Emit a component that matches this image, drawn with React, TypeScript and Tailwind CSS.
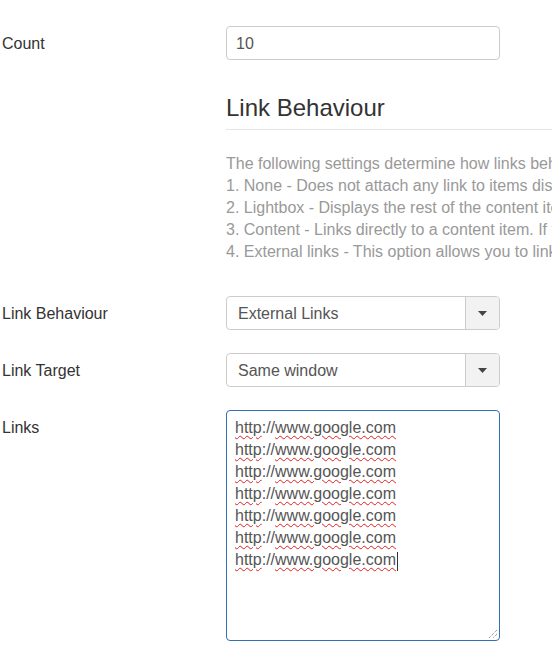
import React from "react";

const font = "font-['Liberation_Sans',Arial,sans-serif]";

function Label({ children }: { children: React.ReactNode }) {
  return (
    <div className="h-[34px] w-[226px] shrink-0 translate-y-px pl-[2px] text-[16px] leading-[34px] text-[#333]">
      {children}
    </div>
  );
}

function Select({ value }: { value: string }) {
  return (
    <div className="flex h-[34px] w-[274px] overflow-hidden rounded-[4px] border border-[#ccc] bg-white">
      <div className="flex-1 translate-y-px pl-[11px] text-[16px] leading-[32px] text-[#555]">{value}</div>
      <div className="flex w-[34px] items-center justify-center border-l border-[#ccc] bg-[#f2f2f2]">
        <svg width="9" height="5" viewBox="0 0 9 5">
          <path d="M0 0h9L4.5 5z" fill="#444" />
        </svg>
      </div>
    </div>
  );
}

function LinkLine({ last }: { last?: boolean }) {
  const wavy = "underline decoration-wavy decoration-[#e02020] decoration-[1px] underline-offset-[2px]";
  return (
    <div className="whitespace-nowrap">
      <span className={wavy}>http</span>
      <span>://</span>
      <span className={wavy}>www.google.com</span>
      {last && (
        <span className="relative">
          <span className="absolute left-[1px] top-[1px] h-[19px] w-px bg-[#333]" />
        </span>
      )}
    </div>
  );
}

export default function App() {
  const links = Array.from({ length: 7 });

  return (
    <div className={`${font} h-[657px] w-[552px] overflow-hidden bg-white pt-[26px]`}>
      <div className="flex">
        <Label>Count</Label>
        <div className="h-[34px] w-[274px] rounded-[4px] border border-[#ccc] pl-[9px] text-[16px] leading-[32px] text-[#555]">
          <div className="translate-y-px">10</div>
        </div>
      </div>

      <div className="ml-[226px] mt-[34px] w-[500px]">
        <h3 className="text-[24px] leading-[28px] text-[#333]">Link Behaviour</h3>
        <div className="mt-[7px] border-t border-[#e5e5e5]" />
        <div className="mt-[23px] whitespace-nowrap text-[16px] leading-[22px] text-[#999]">
          <p>The following settings determine how links behave when clicking on the items.</p>
          <p>1. None - Does not attach any link to items displayed in this module.</p>
          <p>2. Lightbox - Displays the rest of the content item in a lightbox.</p>
          <p>3. Content - Links directly to a content item. If the item is not linked, nothing happens.</p>
          <p>4. External links - This option allows you to link each item to an external URL.</p>
        </div>
      </div>

      <div className="mt-[33px] flex">
        <Label>Link Behaviour</Label>
        <Select value="External Links" />
      </div>

      <div className="mt-[23px] flex">
        <Label>Link Target</Label>
        <Select value="Same window" />
      </div>

      <div className="mt-[23px] flex">
        <Label>Links</Label>
        <div className="relative h-[231px] w-[274px] rounded-[4px] border border-[#3070b3] px-[8px] pt-[6px] text-[16px] leading-[22px] text-[#555]">
          {links.map((_, i) => (
            <LinkLine key={i} last={i === links.length - 1} />
          ))}
          <svg className="absolute bottom-[1px] right-[1px]" width="10" height="10" viewBox="0 0 10 10">
            <path d="M9 1L1 9M9 5L5 9" stroke="#777" strokeWidth="1" strokeDasharray="1 1" />
          </svg>
        </div>
      </div>
    </div>
  );
}
